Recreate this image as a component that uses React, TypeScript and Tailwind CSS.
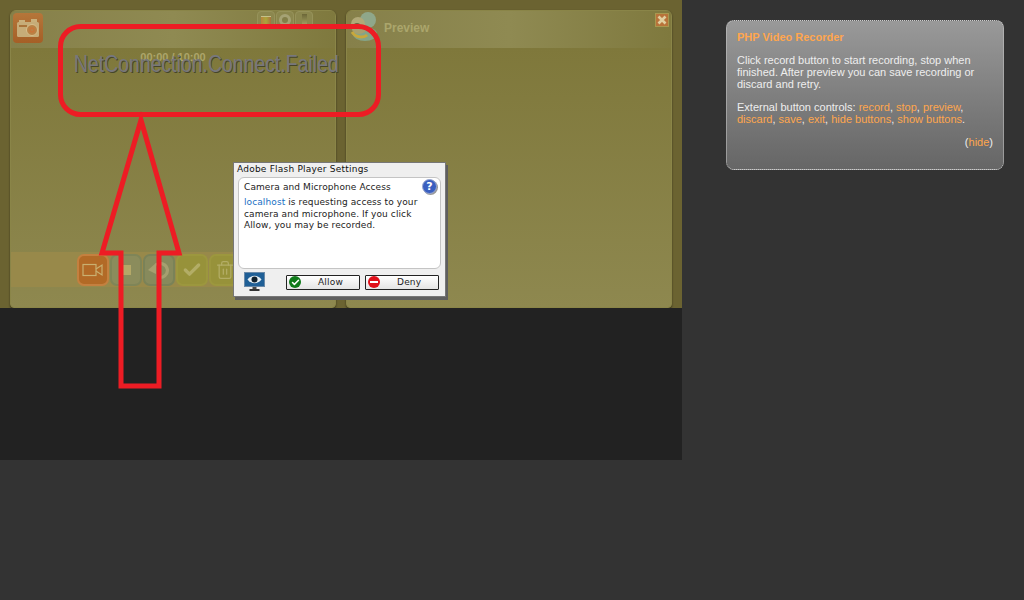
import React from 'react'
import { Check, Trash2 } from 'lucide-react'

const arial = "font-['Liberation_Sans',Arial,sans-serif]"
const flash = "font-['DejaVu_Sans',Verdana,sans-serif]"

const CameraIcon = () => (
  <svg width="24" height="19" viewBox="0 0 24 19">
    <rect x="3" y="1" width="6" height="3" fill="#c9b07c" />
    <rect x="15" y="0" width="6" height="3" fill="#c9b07c" />
    <rect x="1" y="3" width="22" height="15" rx="1.5" fill="#c6ac78" />
    <rect x="3" y="6" width="8" height="2" fill="#a9743a" />
    <circle cx="16" cy="11" r="5.5" fill="#b98245" stroke="#d6bf8c" strokeWidth="1" />
    <circle cx="16" cy="11" r="2" fill="none" stroke="#c9753a" strokeWidth="1.5" />
  </svg>
)

const PreviewIcon = () => (
  <svg width="28" height="30" viewBox="0 0 28 30">
    <circle cx="18" cy="8" r="8" fill="#8fa78a" />
    <ellipse cx="15" cy="22" rx="12" ry="7" fill="#85a488" />
    <circle cx="8" cy="12" r="7" fill="#b0a878" />
    <ellipse cx="9" cy="17" rx="7" ry="5" fill="#a8a070" />
    <path d="M2 20 C6 26 14 26 17 23" fill="none" stroke="#c8a83c" strokeWidth="3" />
    <ellipse cx="7" cy="13" rx="3" ry="2" fill="#66603c" />
  </svg>
)

const RewindIcon = () => (
  <svg width="24" height="20" viewBox="0 0 24 20">
    <path d="M9 5 A7 7 0 1 1 11 17" fill="none" stroke="#a5a070" strokeWidth="3.2" />
    <path d="M1 10 L9 3 V14 Z" fill="#a5a070" />
  </svg>
)

const SmallBtn = ({ children }: { children: React.ReactNode }) => (
  <div className="w-[18px] h-[18px] rounded-[4px] border border-[#96925a] bg-[#8b874e] flex items-center justify-center">
    {children}
  </div>
)

const ToolBtn = ({ color, border, children }: { color: string; border: string; children: React.ReactNode }) => (
  <div className={`w-[32px] h-[32px] rounded-[7px] border-2 flex items-center justify-center ${color} ${border}`}>
    {children}
  </div>
)

const Link = ({ children }: { children: React.ReactNode }) => (
  <span className="text-[#ffa64d]">{children}</span>
)

const Panel = ({ left, right, children }: { left: React.ReactNode; right?: React.ReactNode; children?: React.ReactNode }) => (
  <div className="w-[326px] h-[298px] flex flex-col rounded-t-[6px] rounded-b-[4px] border border-[#8a8548] bg-[#7f783b] shadow-[0_1px_2px_rgba(0,0,0,0.5)] overflow-hidden">
    <div className="h-[37px] shrink-0 flex justify-between bg-gradient-to-r from-[#86804a] via-[#8f8a52] to-[#7f793e]">
      {left}
      {right}
    </div>
    <div className="flex-1 flex flex-col bg-gradient-to-b from-[#7f783b] to-[#8e884f]">{children}</div>
  </div>
)

export default function App() {
  return (
    <div className={`relative w-[1024px] h-[600px] overflow-hidden flex items-start bg-[#333333] ${arial}`}>
      <div className="w-[682px] flex flex-col">
        <div className="h-[308px] bg-[#6b6331] pt-[10px] pl-[10px] flex gap-[10px]">
          <Panel
            left={
              <div className="flex-1 flex justify-between">
                <div className="ml-[2px] mt-[2px] w-[30px] h-[30px] rounded-[4px] bg-gradient-to-b from-[#b5763a] to-[#a55f26] flex items-center justify-center">
                  <CameraIcon />
                </div>
                <div className="flex gap-[1px] mr-[22px]">
                  <SmallBtn>
                    <div className="w-[10px] h-[9px] bg-gradient-to-r from-[#b8823c] via-[#a8a63c] to-[#a8703c] border-t border-[#c5c08a]" />
                  </SmallBtn>
                  <SmallBtn>
                    <div className="w-[12px] h-[12px] rounded-full border-[3px] border-[#a5a274] bg-[#827e48]" />
                  </SmallBtn>
                  <SmallBtn>
                    <div className="w-[5px] h-[12px] bg-gradient-to-b from-[#6c6738] via-[#8b874e] to-[#a8a468]" />
                  </SmallBtn>
                </div>
              </div>
            }
          >
            <div className="text-center text-[11px] font-bold leading-[12px] mt-[3px] text-[#aca56a]">00:00 / 10:00</div>
            <div className="flex-1" />
            <div className="h-[35px] bg-[#98894a] flex items-center gap-[1px] pl-[66px]">
              <ToolBtn color="bg-[#b26a26]" border="border-[#c4803f]">
                <svg width="22" height="14" viewBox="0 0 22 14" fill="none" stroke="#c9b070" strokeWidth="1.2">
                  <rect x="1" y="1.5" width="13" height="11" />
                  <path d="M14 6 L20 2 V12 L14 8" />
                </svg>
              </ToolBtn>
              <ToolBtn color="bg-[#8b8c5c]" border="border-[#7f8558]">
                <div className="w-[10px] h-[10px] bg-[#b4a868]" />
              </ToolBtn>
              <ToolBtn color="bg-[#878a5c]" border="border-[#7a8258]">
                <RewindIcon />
              </ToolBtn>
              <ToolBtn color="bg-[#97923a]" border="border-[#9c973e]">
                <Check size={20} color="#b3ad66" strokeWidth={4} />
              </ToolBtn>
              <ToolBtn color="bg-[#97923a]" border="border-[#9c973e]">
                <Trash2 size={20} color="#b3ad66" strokeWidth={1.5} />
              </ToolBtn>
            </div>
            <div className="h-[20px]" />
          </Panel>
          <Panel
            left={
              <div className="flex items-start">
                <div className="ml-[3px] mt-[1px]">
                  <PreviewIcon />
                </div>
                <span className="ml-[6px] mt-[11px] text-[12px] font-bold leading-[13px] text-[#aba66c]">Preview</span>
              </div>
            }
            right={
              <div className="mt-[2px] mr-[2px] w-[14px] h-[14px] bg-[#b8733a] border border-[#a8984f] flex items-center justify-center">
                <svg width="10" height="10" viewBox="0 0 10 10" stroke="#e0cfa0" strokeWidth="2.6">
                  <path d="M1.5 1.5 L8.5 8.5 M8.5 1.5 L1.5 8.5" />
                </svg>
              </div>
            }
          />
        </div>
        <div className="h-[152px] bg-[#222222]" />
      </div>

      <div className="ml-[44px] mt-[20px] w-[278px] h-[150px] rounded-[8px] border border-dotted border-[#cccccc] bg-gradient-to-b from-[#999999] to-[#666666] px-[10px] pt-[10px] text-[11px] leading-[12px] text-[#eeeeee]">
        <div className="font-bold text-[#ffa64d] h-[12px]">PHP Video Recorder</div>
        <p className="mt-[11px]">
          Click record button to start recording, stop when finished. After preview you can save recording or discard and retry.
        </p>
        <p className="mt-[11px]">
          External button controls: <Link>record</Link>, <Link>stop</Link>, <Link>preview</Link>, <Link>discard</Link>,{' '}
          <Link>save</Link>, <Link>exit</Link>, <Link>hide buttons</Link>, <Link>show buttons</Link>.
        </p>
        <p className="mt-[11px] text-right">
          (<Link>hide</Link>)
        </p>
      </div>

      {/* error text laid over the recorder */}
      <div className="absolute left-[74px] top-[50px] origin-left scale-x-[0.81] text-[24px] leading-[28px] text-[#77777c] [text-shadow:1px_1px_0_#45452a] whitespace-nowrap">
        NetConnection.Connect.Failed
      </div>

      {/* flash settings dialog */}
      <div className={`absolute left-[233px] top-[162px] w-[213px] h-[135px] bg-[#efefef] border border-[#777777] shadow-[2px_3px_0_#5f5f5f] flex flex-col pl-[4px] pr-[4px] ${flash}`}>
        <div className="h-[14px] ml-[-1px] text-[9px] leading-[13px] tracking-[0.22px] text-[#111111] whitespace-nowrap">Adobe Flash Player Settings</div>
        <div className="relative h-[92px] rounded-[6px] border border-[#c4c4c4] bg-white px-[5px] pt-[4px] text-[9px] leading-[11.5px] tracking-[0.1px] text-[#222222]">
          <div className="h-[15px]">Camera and Microphone Access</div>
          <div>
            <span className="text-[#1a6fc4]">localhost</span> is requesting access to your camera and microphone. If you click Allow, you may be recorded.
          </div>
          <div className="absolute right-[3px] top-[1px] w-[15px] h-[15px] rounded-full bg-[#3a5fc0] border border-[#9aa8d0] shadow-[1px_1px_0_#999999] flex items-center justify-center text-[11px] font-bold text-white">
            ?
          </div>
        </div>
        <div className="flex items-center mt-[3px]">
          <svg width="21" height="20" viewBox="0 0 21 20" className="ml-[6px]">
            <rect x="0.5" y="0.5" width="20" height="14" fill="#1f5f96" stroke="#6a8aa8" strokeWidth="1" />
            <path d="M3.5 7.5 C7.5 2.5 13.5 2.5 17.5 7.5 C13.5 12.5 7.5 12.5 3.5 7.5Z" fill="#e8f0f4" />
            <circle cx="10.5" cy="7.5" r="3" fill="#10202c" />
            <rect x="8.5" y="15" width="4" height="2" fill="#444444" />
            <rect x="5.5" y="17" width="10" height="2" fill="#333333" />
          </svg>
          <button className="ml-[21px] w-[74px] h-[15px] rounded-[1px] border border-[#222222] bg-gradient-to-b from-white to-[#e4e4e4] flex items-center pl-[2px] text-[9px] leading-[11px]">
            <span className="w-[12px] h-[12px] rounded-full bg-[#0f7a1a] flex items-center justify-center">
              <Check size={9} color="white" strokeWidth={4} />
            </span>
            <span className="ml-[17px] text-[#222222] tracking-[0.2px]">Allow</span>
          </button>
          <button className="ml-[5px] w-[74px] h-[15px] rounded-[1px] border border-[#222222] bg-gradient-to-b from-white to-[#e4e4e4] flex items-center pl-[2px] text-[9px] leading-[11px]">
            <span className="w-[12px] h-[12px] rounded-full bg-[#e0101a] flex items-center justify-center">
              <span className="w-[8px] h-[2px] bg-white" />
            </span>
            <span className="ml-[17px] text-[#222222] tracking-[0.2px]">Deny</span>
          </button>
        </div>
      </div>

      {/* red annotation drawn on top of the screenshot */}
      <svg className="absolute left-0 top-0 pointer-events-none" width="1024" height="600" viewBox="0 0 1024 600" fill="none" stroke="#ed1c24" strokeWidth="5">
        <rect x="60.5" y="26.5" width="318" height="88" rx="20" />
        <path d="M121 386 H159 V253 H179 L141 120 L102 253 H121 Z" strokeLinejoin="miter" />
      </svg>
    </div>
  )
}
